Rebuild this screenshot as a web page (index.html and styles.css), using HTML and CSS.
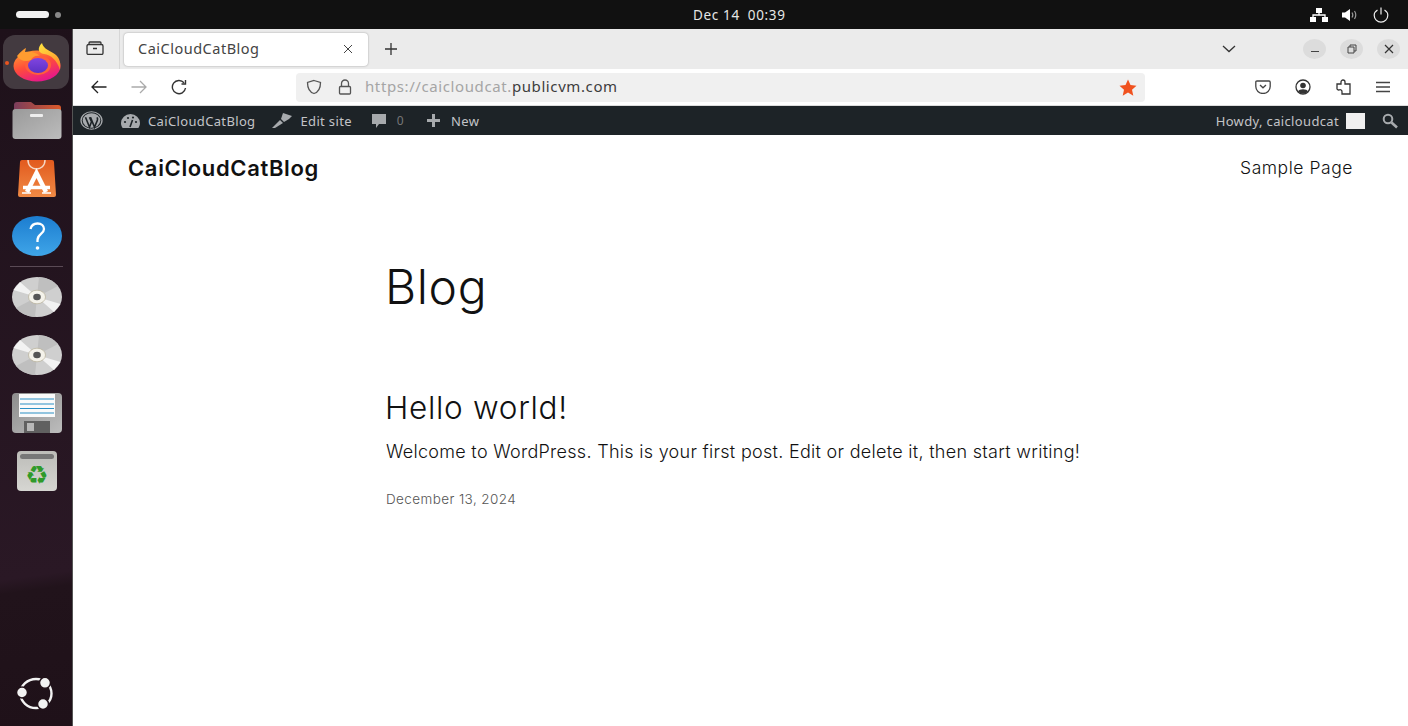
FILE: index.html
```html
<!DOCTYPE html>
<html lang="en">
<head>
<meta charset="utf-8">
<title>CaiCloudCatBlog</title>
<link rel="stylesheet" href="styles.css">
</head>
<body>
<header class="topbar">
  <div class="workspaces"><span class="ws-active"></span><span class="ws-dot"></span></div>
  <div class="clock"><span>Dec 14</span><span>00:39</span></div>
  <div class="tray">
    <svg width="18" height="14" viewBox="0 0 18 14"><path d="M6 0h6v5H6zM0 9h6v5H0zM12 9h6v5h-6z" fill="#fff"/><path d="M9 5v2M3 9V7h12v2" stroke="#fff" stroke-width="1.3" fill="none"/></svg>
    <svg width="17" height="14" viewBox="0 0 17 14"><path d="M0 4.500h3L8 1v12L3 9.500H0z" fill="#fff"/><path d="M10 4.500c1 1.500 1 3.500 0 5M12.500 3c1.600 2.500 1.600 5.500 0 8" stroke="#999" stroke-width="1.200" fill="none"/></svg>
    <svg width="16" height="16" viewBox="0 0 16 16"><path d="M4.500 3C2.500 4.200 1.200 6 1.200 8.300a6.800 6.800 0 0 0 13.600 0C14.800 6 13.500 4.200 11.500 3M8 0.500v7" stroke="#eee" stroke-width="1.200" fill="none"/></svg>
  </div>
</header>
<div class="desktop">
  <nav class="dock">
    <div class="dock-item dock-running">
      <span class="run-dot"></span>
      <svg width="48" height="39" viewBox="0 0 48 39">
        <defs>
          <linearGradient id="fx" x1="0.100" y1="0" x2="0.600" y2="1"><stop offset="0" stop-color="#ffa02e"/><stop offset=".5" stop-color="#ff4d3a"/><stop offset="1" stop-color="#e5168c"/></linearGradient>
          <linearGradient id="fxy" x1="0.300" y1="0" x2="0.700" y2="1"><stop offset="0" stop-color="#ffdf3f"/><stop offset="1" stop-color="#ff8a2a"/></linearGradient>
          <linearGradient id="fxg" x1="0" y1="0" x2="0" y2="1"><stop offset="0" stop-color="#8045e0"/><stop offset="1" stop-color="#5c31c4"/></linearGradient>
        </defs>
        <ellipse cx="24" cy="23" rx="23.500" ry="15.500" fill="url(#fx)"/>
        <path d="M29 0C30 6 38 8 43 12 47 16 48 20 47 27 44 17 38 12 31 11 25 10 24 5 29 0z" fill="url(#fxy)"/>
        <ellipse cx="25" cy="22" rx="13" ry="10" fill="#ff5f3a"/>
        <ellipse cx="25" cy="22.500" rx="10" ry="7.500" fill="url(#fxg)"/>
        <path d="M4 13C7 9 11 6 13 5L12 9C18 8 24 10 27 13 23 12 19 14 18 17 13 19 7 18 4 13z" fill="#ff9c30"/>
      </svg>
    </div>
    <div class="dock-item">
      <svg width="50" height="38" viewBox="0 0 50 38">
        <defs><linearGradient id="fold" x1="0" y1="0" x2="1" y2="0"><stop offset="0" stop-color="#7a3d5c"/><stop offset="1" stop-color="#dd5a2a"/></linearGradient>
        <linearGradient id="foldb" x1="0" y1="0" x2="1" y2="1"><stop offset="0" stop-color="#9a9a9a"/><stop offset="1" stop-color="#bcbcbc"/></linearGradient></defs>
        <path d="M2 12V4q0-3 3-3h14l4 3h23q3 0 3 3v7z" fill="url(#fold)"/>
        <rect x="0.500" y="8" width="49" height="30" rx="3" fill="url(#foldb)"/>
        <rect x="18" y="13" width="13" height="3" rx="1" fill="#eee"/>
      </svg>
    </div>
    <div class="dock-item">
      <svg width="40" height="40" viewBox="0 0 40 40">
        <defs><linearGradient id="st" x1="0" y1="0" x2="0" y2="1"><stop offset="0" stop-color="#e25a1e"/><stop offset="1" stop-color="#f08a45"/></linearGradient></defs>
        <path d="M3 4q0-2 2-2h30q2 0 2 2l2 33q0 2-2 2H3q-2 0-2-2z" fill="url(#st)"/>
        <path d="M11 2c0 12 17 12 17 0" stroke="#f6d8c6" stroke-width="1.500" fill="none"/>
        <path d="M10 34L19.500 15 29 34" stroke="#fff" stroke-width="4.500" fill="none"/>
        <path d="M6 29.500h27" stroke="#fff" stroke-width="3.500"/>
        <path d="M5 35h9M25 35h9" stroke="#fff" stroke-width="1.500"/>
      </svg>
    </div>
    <div class="dock-item">
      <svg width="50" height="40" viewBox="0 0 50 40">
        <defs><linearGradient id="hp" x1="0" y1="0" x2="0" y2="1"><stop offset="0" stop-color="#1c7dd0"/><stop offset="1" stop-color="#3fa5e8"/></linearGradient></defs>
        <ellipse cx="25" cy="20" rx="25" ry="20" fill="url(#hp)"/>
        <path d="M18.500 13c1-4 4-5.500 7-5.500 4 0 6.500 2.500 6.500 5.500 0 5-6.500 5-6.500 11v2" stroke="#fff" stroke-width="2.300" fill="none"/>
        <circle cx="25.500" cy="32" r="1.800" fill="#fff"/>
      </svg>
    </div>
    <div class="dock-sep"></div>
    <div class="dock-item">
      <svg width="50" height="40" viewBox="0 0 50 40">
        <defs>
          <g id="cd">
            <ellipse cx="25" cy="20" rx="25" ry="20" fill="#cfcfcf"/>
            <path d="M25 20L27 0A25 20 0 0 1 46 9zM25 20L23 40A25 20 0 0 1 4 31z" fill="#bfbfbf"/>
            <path d="M25 20L1.500 13 8 5zM25 20L48.500 27 42 35z" fill="#f2f2f2"/>
            <ellipse cx="25" cy="20" rx="8.500" ry="6.800" fill="#f4f2ea" stroke="#b8b09a" stroke-width=".7"/>
            <ellipse cx="25" cy="20" rx="3.800" ry="3.200" fill="#555"/>
          </g>
        </defs>
        <use href="#cd"/>
      </svg>
    </div>
    <div class="dock-item">
      <svg width="50" height="40" viewBox="0 0 50 40"><use href="#cd"/></svg>
    </div>
    <div class="dock-item">
      <svg width="50" height="40" viewBox="0 0 50 40">
        <defs><linearGradient id="fl" x1="0" y1="0" x2="1" y2="1"><stop offset="0" stop-color="#8c8c8c"/><stop offset="1" stop-color="#bdbdbd"/></linearGradient></defs>
        <rect width="50" height="40" rx="4" fill="url(#fl)"/>
        <rect x="7" y="1" width="36" height="23" fill="#fafafa"/>
        <path d="M8 6h34M8 11h34M8 15.500h34M8 20h34" stroke="#2b8fc4" stroke-width="1"/>
        <rect x="12" y="28" width="26" height="12" fill="#606060"/>
        <rect x="15" y="30" width="7" height="8" fill="#b8b8b8"/>
      </svg>
    </div>
    <div class="dock-item">
      <svg width="40" height="40" viewBox="0 0 40 40">
        <defs><linearGradient id="tr" x1="0" y1="0" x2="0" y2="1"><stop offset="0" stop-color="#bcbcb8"/><stop offset="1" stop-color="#d6d6d2"/></linearGradient></defs>
        <rect width="40" height="40" rx="4" fill="url(#tr)"/>
        <rect x="3" y="3" width="34" height="5" rx="2.500" fill="#777"/>
        <text x="20" y="33" class="recycle" text-anchor="middle">♻</text>
      </svg>
    </div>
    <div class="dock-spacer"></div>
    <svg class="dock-ubuntu" width="40" height="33" viewBox="0 0 40 33">
      <ellipse cx="20" cy="16.500" rx="15.500" ry="14.500" stroke="#f2f2f2" stroke-width="2.400" fill="none"/>
      <circle cx="6" cy="15.500" r="5.500" fill="#f2f2f2" stroke="#211219" stroke-width="1.500"/>
      <circle cx="29" cy="5.800" r="5.500" fill="#f2f2f2" stroke="#211219" stroke-width="1.500"/>
      <circle cx="27" cy="27" r="5.500" fill="#f2f2f2" stroke="#211219" stroke-width="1.500"/>
    </svg>
  </nav>
  <main class="browser">
    <div class="tabbar">
      <div class="tabview">
        <svg width="18" height="14" viewBox="0 0 18 14"><path d="M3 3.500V2q0-1 1-1h10q1 0 1 1v1.500M2.500 3.500h13q1.500 0 1.500 1.500v7q0 1.500-1.500 1.500h-13Q1 13.500 1 12V5q0-1.500 1.500-1.500zM7 7.500h4" stroke="#333" stroke-width="1.300" fill="none"/></svg>
      </div>
      <div class="tab">
        <span class="tab-title">CaiCloudCatBlog</span>
        <svg width="10" height="10" viewBox="0 0 10 10"><path d="M1 1l8 8M9 1l-8 8" stroke="#444" stroke-width="1"/></svg>
      </div>
      <svg class="newtab" width="14" height="14" viewBox="0 0 14 14"><path d="M7 1v12M1 7h12" stroke="#333" stroke-width="1.300"/></svg>
      <div class="tabbar-fill"></div>
      <svg class="tabchev" width="14" height="8" viewBox="0 0 14 8"><path d="M1 1l6 5.500L13 1" stroke="#333" stroke-width="1.300" fill="none"/></svg>
      <div class="winbtns">
        <span class="winbtn"><svg width="10" height="10" viewBox="0 0 10 10"><path d="M1 7.500h8" stroke="#444" stroke-width="1"/></svg></span>
        <span class="winbtn"><svg width="10" height="10" viewBox="0 0 10 10"><path d="M1 3h6v6H1zM3 3V1h6v6H7" stroke="#444" stroke-width="1" fill="none"/></svg></span>
        <span class="winbtn"><svg width="10" height="10" viewBox="0 0 10 10"><path d="M1 1l8 8M9 1l-8 8" stroke="#333" stroke-width="1.200"/></svg></span>
      </div>
    </div>
    <div class="navbar">
      <div class="navbtns">
        <svg width="16" height="14" viewBox="0 0 16 14"><path d="M15.500 7H1M7 1L1 7l6 6" stroke="#222" stroke-width="1.300" fill="none"/></svg>
        <svg width="16" height="14" viewBox="0 0 16 14"><path d="M.5 7H15M9 1l6 6-6 6" stroke="#aaa" stroke-width="1.300" fill="none"/></svg>
        <svg width="16" height="16" viewBox="0 0 16 16"><path d="M14.500 9a6.600 6.600 0 1 1-1.500-5.200M14.500 1v4h-4" stroke="#333" stroke-width="1.400" fill="none"/></svg>
      </div>
      <div class="urlbar">
        <svg width="16" height="16" viewBox="0 0 16 16"><path d="M8 1.500l6.500 2c0 6-1.500 9.500-6.500 11-5-1.500-6.500-5-6.500-11z" stroke="#555" stroke-width="1.300" fill="none"/></svg>
        <svg width="14" height="16" viewBox="0 0 14 16"><path d="M3.500 7V4.500a3.500 3.500 0 0 1 7 0V7M2.500 7.500h9q1 0 1 1V14q0 1-1 1h-9q-1 0-1-1V8.500q0-1 1-1z" stroke="#555" stroke-width="1.300" fill="none"/></svg>
        <span class="url"><span class="url-dim">https://caicloudcat.</span>publicvm.com</span>
        <span class="urlbar-fill"></span>
        <svg width="18" height="17" viewBox="0 0 18 17"><path d="M9 .5l2.500 5.600 6 .6-4.500 4 1.300 6L9 13.600 3.700 16.700l1.300-6-4.500-4 6-.6z" fill="#f0521f"/></svg>
      </div>
      <div class="navtools">
        <svg width="16" height="14" viewBox="0 0 16 14"><path d="M2 1h12q1.200 0 1.200 1.200v4.300a7.200 7 0 0 1-14.400 0V2.200Q.8 1 2 1zM5 5l3 2.800L11 5" stroke="#444" stroke-width="1.300" fill="none"/></svg>
        <svg width="16" height="16" viewBox="0 0 16 16"><circle cx="8" cy="8" r="7" stroke="#333" stroke-width="1.300" fill="none"/><circle cx="8" cy="6.500" r="2.800" fill="#333"/><path d="M3 12.500c1-3 9-3 10 0-2 2.500-8 2.500-10 0z" fill="#333"/></svg>
        <svg width="16" height="16" viewBox="0 0 16 16"><path d="M1 8V5h4V3a2 2 0 0 1 4 0v2h5v10H6v-2a2 2 0 0 0-3-2 2 2 0 0 1-2-1V8z" stroke="#333" stroke-width="1.300" fill="none"/></svg>
        <svg width="14" height="12" viewBox="0 0 14 12"><path d="M0 1.500h14M0 6h14M0 10.500h14" stroke="#444" stroke-width="1.300"/></svg>
      </div>
    </div>
    <div class="adminbar">
      <svg class="wp-logo" width="23" height="19" viewBox="0 0 23 23" preserveAspectRatio="none">
        <circle cx="11.500" cy="11.500" r="10.500" stroke="#a7aaad" stroke-width="1.300" fill="none"/>
        <circle cx="11.500" cy="11.500" r="8.800" fill="#a7aaad"/>
        <path d="M5.500 7.500l4 12 2-6.500-2-5.500M10.500 7.500l4 12 2.800-8c.6-1.500.2-2.800-.3-3.700" stroke="#1d2327" stroke-width="1.600" fill="none"/>
      </svg>
      <span class="ab-item ab-site">
        <svg width="19" height="14" viewBox="0 0 19 14"><path d="M9.500 0A9.500 9 0 0 0 0 9c0 2 .7 3.800 1.700 5h15.600c1-1.200 1.700-3 1.700-5A9.500 9 0 0 0 9.500 0z" fill="#a7aaad"/><path d="M9 13l2.500-7" stroke="#1d2327" stroke-width="1.600"/><circle cx="4" cy="8" r="1.100" fill="#1d2327"/><circle cx="7" cy="4" r="1.100" fill="#1d2327"/><circle cx="12" cy="3.500" r="1.100" fill="#1d2327"/><circle cx="15" cy="8" r="1.100" fill="#1d2327"/></svg>
        CaiCloudCatBlog
      </span>
      <span class="ab-item ab-edit">
        <svg width="20" height="15" viewBox="0 0 20 15"><path d="M11 0l9 3-3 3-5 3-3-3z" fill="#a7aaad"/><path d="M8 7l3 3-8 5H0z" fill="#a7aaad"/></svg>
        Edit site
      </span>
      <span class="ab-item ab-comments">
        <svg width="16" height="16" viewBox="0 0 16 16"><path d="M1 1h14v10H8l-3 4v-4H1z" fill="#a7aaad"/></svg>
        <span class="ab-count">0</span>
      </span>
      <span class="ab-item ab-new">
        <svg width="15" height="15" viewBox="0 0 15 15"><path d="M7.500 1v13M1 7.500h13" stroke="#a7aaad" stroke-width="3"/></svg>
        New
      </span>
      <span class="adminbar-fill"></span>
      <span class="ab-item ab-howdy">Howdy, caicloudcat</span>
      <span class="avatar"></span>
      <svg class="ab-search" width="16" height="16" viewBox="0 0 16 16"><circle cx="6" cy="6" r="4.300" stroke="#a7aaad" stroke-width="2" fill="none"/><path d="M9.500 9.500L15 14.500" stroke="#a7aaad" stroke-width="2.600"/></svg>
    </div>
    <div class="page">
      <div class="site-header">
        <span class="site-title">CaiCloudCatBlog</span>
        <span class="site-nav">Sample Page</span>
      </div>
      <div class="content">
        <h1 class="page-title">Blog</h1>
        <h2 class="post-title">Hello world!</h2>
        <p class="post-excerpt">Welcome to WordPress. This is your first post. Edit or delete it, then start writing!</p>
        <p class="post-date">December 13, 2024</p>
      </div>
    </div>
  </main>
</div>
</body>
</html>
```

FILE: styles.css
```css
* { box-sizing: border-box; }
html, body { margin: 0; height: 100%; overflow: hidden; }
body { display: flex; flex-direction: column; width: 1408px; height: 726px; font-family: "Noto Sans", sans-serif; background: #fff; }
svg { display: block; flex: none; }

.topbar { height: 29px; flex: none; background: #111; display: grid; grid-template-columns: 677px auto 1fr; align-items: center; padding: 0 19px 0 16px; color: #e6e6e6; }
.workspaces { display: flex; align-items: center; gap: 6px; }
.ws-active { width: 33px; height: 7px; border-radius: 4px; background: #f2f2f2; }
.ws-dot { width: 6px; height: 6px; border-radius: 50%; background: #888; }
.clock { display: flex; gap: 8px; font-size: 13.500px; letter-spacing: .65px; }
.tray { display: flex; align-items: center; justify-content: flex-end; gap: 14px; }

.desktop { flex: 1; display: flex; min-height: 0; }
.dock { width: 73px; flex: none; display: flex; flex-direction: column; align-items: center; padding: 4px 0 0; background: linear-gradient(172deg, #1e111a 0%, #2a1825 78%, #21131b 80%, #1f1119 100%); border-right: 1px solid #555; }
.dock-item { height: 58px; width: 66px; flex: none; display: flex; align-items: center; justify-content: center; position: relative; border-radius: 12px; }
.dock-item svg { margin-left: 1px; }
.dock-running { background: #433a40; height: 54px; margin: 2px 0; }
.run-dot { position: absolute; left: 2px; top: 26px; width: 4px; height: 4px; border-radius: 50%; background: #e9541f; }
.dock-sep { width: 53px; height: 1px; background: #5a4a55; margin: 1px 0 1px; }
.dock-spacer { flex: 1; }
.dock-ubuntu { margin-bottom: 16px; }
.recycle { font-family: "DejaVu Sans", sans-serif; font-size: 26px; fill: #2f9a2a; }

.browser { flex: 1; min-width: 0; display: flex; flex-direction: column; }
.tabbar { height: 40px; flex: none; display: flex; align-items: center; background: #ebebeb; }
.tabview { width: 47px; height: 40px; display: flex; align-items: center; justify-content: center; padding-right: 3px; padding-bottom: 2px; border-right: 1px solid #d6d6d6; }
.tab { width: 244px; height: 33px; margin-left: 4px; background: #fff; border-radius: 4px; box-shadow: 0 0 2px rgba(0,0,0,.35); display: flex; align-items: center; justify-content: space-between; padding: 0 15px 0 14px; }
.tab-title { font-size: 14.500px; color: #444; letter-spacing: .5px; padding-bottom: 2px; }
.newtab { margin-left: 16px; }
.tabbar-fill { flex: 1; }
.tabchev { margin-right: 67px; }
.winbtns { display: flex; gap: 14px; margin-right: 8px; }
.winbtn { width: 23px; height: 20px; border-radius: 50%; background: #dcdcdc; display: flex; align-items: center; justify-content: center; }

.navbar { height: 37px; flex: none; display: flex; align-items: center; background: #fff; border-bottom: 1px solid #ddd; }
.navbtns { display: flex; align-items: center; gap: 24px; padding-left: 18px; width: 223px; }
.urlbar { width: 849px; height: 29px; flex: none; background: #f0f0f0; border-radius: 4px; display: flex; align-items: center; gap: 16px; padding: 0 8px 0 10px; }
.url { font-size: 15px; color: #3d3d3d; letter-spacing: .6px; margin-left: -3px; padding-bottom: 2px; }
.url-dim { color: #a5a5a5; }
.urlbar-fill { flex: 1; }
.navtools { flex: 1; display: flex; align-items: center; justify-content: space-between; padding: 0 18px 0 110px; }

.adminbar { height: 29px; flex: none; display: flex; align-items: center; background: #1d2327; color: #c3c4c7; font-size: 13px; padding: 0 10px 0 7px; }
.ab-item { display: flex; align-items: center; white-space: nowrap; letter-spacing: .35px; }
.ab-site { margin-left: 18px; gap: 8px; }
.ab-edit { margin-left: 17px; gap: 8px; }
.ab-comments { margin-left: 19px; gap: 10px; }
.ab-count { color: #777; font-size: 12px; }
.ab-new { margin-left: 22px; gap: 10px; }
.adminbar-fill { flex: 1; }
.avatar { width: 19px; height: 16px; background: #f0f0f0; margin: 0 17px 0 7px; }

.page { flex: 1; background: #fff; color: #111; font-family: Inter, sans-serif; min-height: 0; }
.site-header { display: flex; justify-content: space-between; align-items: center; padding: 21px 55px 0 55px; height: 44px; }
.site-title { font-size: 22px; font-weight: 600; letter-spacing: .65px; }
.site-nav { font-size: 17.500px; font-weight: 300; letter-spacing: .55px; }
.content { padding-left: 313px; }
.page-title { margin: 0 0 0 -1px; padding-top: 80px; font-size: 48px; line-height: 56px; font-weight: 300; letter-spacing: .6px; }
.post-title { margin: 0 0 0 -1px; padding-top: 74px; font-size: 31.500px; line-height: 38px; font-weight: 300; letter-spacing: .7px; }
.post-excerpt { margin: 0; padding-top: 12px; font-size: 18px; line-height: 26px; font-weight: 300; letter-spacing: .29px; }
.post-date { margin: 0; padding-top: 25px; font-size: 13.500px; line-height: 18px; font-weight: 300; color: #555; letter-spacing: .4px; }
```
